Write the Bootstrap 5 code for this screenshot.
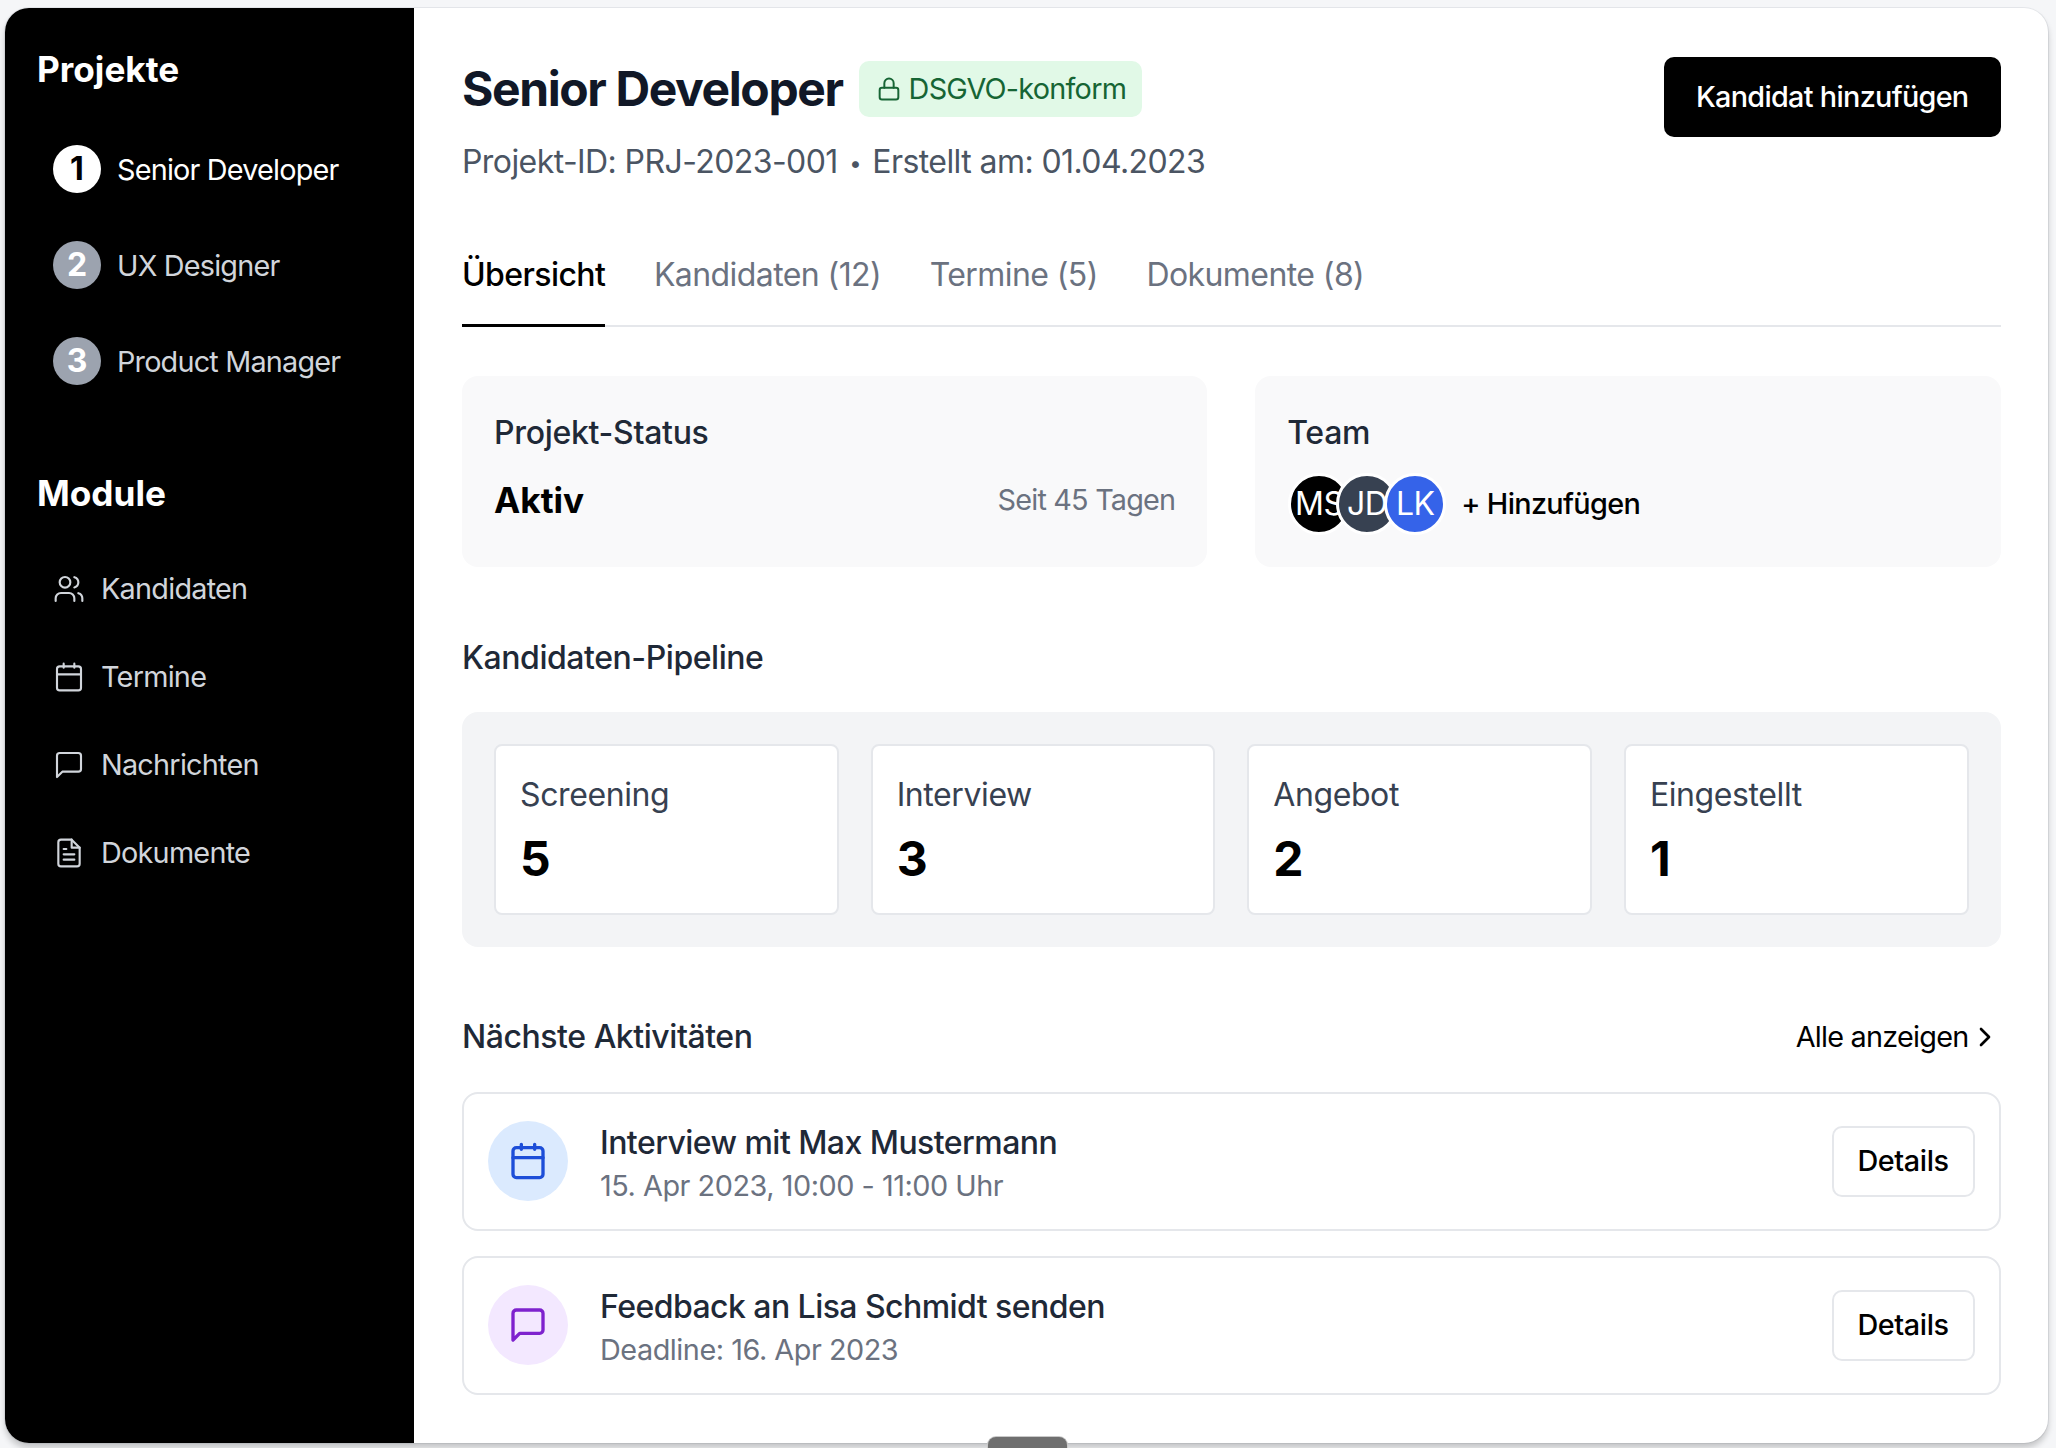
<!DOCTYPE html>
<html lang="de">
<head>
    <meta charset="UTF-8">
    <meta name="viewport" content="width=device-width, initial-scale=1.0">
    <title>Senior Developer</title>
    <link rel="stylesheet" href="https://cdn.jsdelivr.net/npm/bootstrap@5.3.0/dist/css/bootstrap.min.css">
    <style>
        html, body { height: 100%; }
        body {
            background-color: #f5f6f8;
            font-family: Inter, "Liberation Sans", sans-serif;
            color: #000;
            padding: 8px 8px 0 5px;
            overflow: hidden;
        }
        .app-window {
            height: 1435px;
            background: #fff;
            border-radius: 24px;
            overflow: hidden;
            box-shadow: 0 5px 6px rgba(0, 0, 0, 0.2), 0 0 0 1px #e5e7eb;
        }
        .side-panel { width: 409px; flex: none; background: #000; padding: 37px 0 0 32px; }
        .side-title { font-size: 35.2px; line-height: 48px; font-weight: 700; color: #fff; margin: 0; }
        .side-step { height: 96px; padding-left: 16px; gap: 16px; color: #d1d5db; font-size: 28.8px; letter-spacing: -0.8px; line-height: 46px; }
        .side-step.is-active { color: #fff; }
        .step-num {
            width: 48px; height: 48px; border-radius: 50%;
            background: #9ca3af; color: #fff; font-weight: 700; font-size: 32px; letter-spacing: 0;
        }
        .is-active .step-num { background: #fff; color: #000; }
        .step-name { padding-top: 1px; }
        .module-title { margin-top: 60px; margin-bottom: 28px; }
        .side-module { height: 88px; padding-left: 16px; gap: 16px; color: #d1d5db; font-size: 28.8px; letter-spacing: -0.75px; }
        .side-module svg { width: 32px; height: 32px; }
        .main-panel { flex: 1; min-width: 0; padding: 49px 47.5px 0 48px; }
        .page-title { font-size: 48px; line-height: 64px; font-weight: 700; color: #111827; margin: 0; letter-spacing: -1.4px; }
        .dsgvo-tag {
            background: #e1f9e7; color: #166534; font-size: 28.8px; height: 56px; letter-spacing: -0.75px;
            border-radius: 10px; padding: 0 16px; gap: 6px;
        }
        .dsgvo-tag svg { width: 28px; height: 28px; }
        .page-sub { font-size: 32px; line-height: 48px; color: #4b5563; margin: 17px 0 0; letter-spacing: -0.58px; }
        .sub-dot { font-size: 22px; margin: 0 3px; vertical-align: 2px; }
        .add-btn {
            background: #000; color: #fff; border: 0; border-radius: 10px; letter-spacing: -0.7px;
            font-size: 28.8px; font-weight: 500; height: 80px; padding: 0 32px;
        }
        .tab-row { margin-top: 38px; border-bottom: 2px solid #e5e7eb; gap: 48.6px; height: 102px; }
        .tab-link { font-size: 32px; color: #6b7280; text-decoration: none; height: 102px; padding-top: 26px; line-height: 48px; letter-spacing: -0.58px; }
        .tab-link.is-current { color: #000; font-weight: 500; border-bottom: 3px solid #000; }
        .info-row { margin-top: 48.5px; gap: 48px; }
        .info-box { flex: 1 1 0; height: 191px; background: #f9f9fa; border-radius: 16px; padding: 33px 32px 32px; }
        .info-label { font-size: 32px; line-height: 48px; font-weight: 500; color: #1f2937; letter-spacing: -0.3px; }
        .status-val { font-size: 35.2px; font-weight: 700; line-height: 56px; }
        .status-since { font-size: 28.8px; color: #6b7280; letter-spacing: -0.8px; }
        .status-line { margin-top: 15px; }
        .team-line { margin-top: 16.5px; margin-left: 1px; }
        .avatar {
            width: 62px; height: 62px; border: 3px solid #fff; border-radius: 50%;
            color: #fff; font-size: 32px; margin-right: -14px; flex: none; overflow: hidden; letter-spacing: -0.5px;
        }
        .team-add { margin-left: 29px; font-size: 28.8px; font-weight: 500; color: #000; letter-spacing: -0.65px; }
        .sect-title { font-size: 32px; line-height: 48px; font-weight: 500; color: #1f2937; margin: 0; letter-spacing: -0.45px; }
        .pipe-box { background: #f3f4f6; border-radius: 16px; padding: 32px; gap: 32px; margin-top: 30px; }
        .pipe-card {
            flex: 1 1 0; height: 171px; background: #fff; border: 2px solid #e5e7eb;
            border-radius: 8px; padding: 25px 24px 24px;
        }
        .pipe-label { font-size: 32px; line-height: 48px; color: #374151; letter-spacing: -0.4px; }
        .pipe-num { font-size: 48px; line-height: 64px; font-weight: 700; margin-top: 8px; }
        .all-link { font-size: 28.8px; color: #000; text-decoration: none; letter-spacing: -0.75px; }
        .all-link svg { width: 32px; height: 32px; }
        .act-row {
            height: 139px; border: 2px solid #e5e7eb; border-radius: 16px; padding: 0 24px;
            margin-bottom: 25px; gap: 32px;
        }
        .act-icon { width: 80px; height: 80px; border-radius: 50%; flex: none; }
        .act-icon svg { width: 40px; height: 40px; }
        .act-blue { background: #dbeafe; color: #1d4ed8; }
        .act-purple { background: #f3e8ff; color: #7e22ce; }
        .act-text { padding-top: 5px; }
        .act-title { font-size: 32px; line-height: 44px; font-weight: 500; color: #1f2937; letter-spacing: -0.55px; }
        .act-sub { font-size: 28.8px; line-height: 42px; color: #6b7280; letter-spacing: -0.46px; }
        .detail-btn {
            background: #fff; border: 2px solid #e5e7eb; border-radius: 10px; color: #000; letter-spacing: -0.4px;
            font-size: 28.8px; font-weight: 500; width: 143px; height: 71px;
        }
        .drag-handle {
            position: fixed; left: 988px; bottom: 0; width: 79px; height: 11px;
            background: #6f6f6f; border-radius: 8px 8px 0 0; box-shadow: 0 0 0 1px #c9c9c9;
        }
    </style>
</head>
<body>
    <div class="app-window d-flex">

        <!-- Sidebar -->
        <aside class="side-panel">
            <h2 class="side-title">Projekte</h2>
            <div class="mt-4 pt-1">
                <div class="side-step is-active d-flex align-items-center"><span class="step-num d-flex align-items-center justify-content-center">1</span><span class="step-name">Senior Developer</span></div>
                <div class="side-step d-flex align-items-center"><span class="step-num d-flex align-items-center justify-content-center">2</span><span class="step-name">UX Designer</span></div>
                <div class="side-step d-flex align-items-center"><span class="step-num d-flex align-items-center justify-content-center">3</span><span class="step-name">Product Manager</span></div>
            </div>
            <h2 class="side-title module-title">Module</h2>
            <div class="side-module d-flex align-items-center">
                <svg viewBox="0 0 24 24" fill="none" stroke="currentColor" stroke-width="1.6" stroke-linecap="round" stroke-linejoin="round"><path d="M16 21v-2a4 4 0 0 0-4-4H6a4 4 0 0 0-4 4v2"/><circle cx="9" cy="7" r="4"/><path d="M22 21v-2a4 4 0 0 0-3-3.87"/><path d="M16 3.13a4 4 0 0 1 0 7.75"/></svg>
                Kandidaten
            </div>
            <div class="side-module d-flex align-items-center">
                <svg viewBox="0 0 24 24" fill="none" stroke="currentColor" stroke-width="1.6" stroke-linecap="round" stroke-linejoin="round"><rect x="3" y="4" width="18" height="18" rx="2"/><path d="M16 2v3M8 2v3M3 10h18"/></svg>
                Termine
            </div>
            <div class="side-module d-flex align-items-center">
                <svg viewBox="0 0 24 24" fill="none" stroke="currentColor" stroke-width="1.6" stroke-linecap="round" stroke-linejoin="round"><path d="M21 15a2 2 0 0 1-2 2H7l-4 4V5a2 2 0 0 1 2-2h14a2 2 0 0 1 2 2z"/></svg>
                Nachrichten
            </div>
            <div class="side-module d-flex align-items-center">
                <svg viewBox="0 0 24 24" fill="none" stroke="currentColor" stroke-width="1.6" stroke-linecap="round" stroke-linejoin="round"><path d="M14 2H6a2 2 0 0 0-2 2v16a2 2 0 0 0 2 2h12a2 2 0 0 0 2-2V8z"/><path d="M14 2v6h6M16 13H8M16 17H8M10 9H8"/></svg>
                Dokumente
            </div>
        </aside>

        <!-- Inhalt -->
        <main class="main-panel">
            <div class="d-flex justify-content-between align-items-start">
                <div>
                    <div class="d-flex align-items-center gap-3">
                        <h1 class="page-title">Senior Developer</h1>
                        <span class="dsgvo-tag d-flex align-items-center">
                            <svg viewBox="0 0 24 24" fill="none" stroke="currentColor" stroke-width="1.7" stroke-linecap="round" stroke-linejoin="round"><rect x="4" y="11" width="16" height="10" rx="2"/><path d="M8 11V7a4 4 0 0 1 8 0v4"/></svg>
                            DSGVO-konform
                        </span>
                    </div>
                    <p class="page-sub">Projekt-ID: PRJ-2023-001 <span class="sub-dot">•</span> Erstellt am: 01.04.2023</p>
                </div>
                <button class="add-btn" type="button">Kandidat hinzufügen</button>
            </div>

            <div class="tab-row d-flex">
                <a class="tab-link is-current" href="#">Übersicht</a>
                <a class="tab-link" href="#">Kandidaten (12)</a>
                <a class="tab-link" href="#">Termine (5)</a>
                <a class="tab-link" href="#">Dokumente (8)</a>
            </div>

            <div class="info-row d-flex">
                <div class="info-box">
                    <div class="info-label">Projekt-Status</div>
                    <div class="status-line d-flex justify-content-between align-items-center">
                        <span class="status-val">Aktiv</span>
                        <span class="status-since">Seit 45 Tagen</span>
                    </div>
                </div>
                <div class="info-box">
                    <div class="info-label">Team</div>
                    <div class="team-line d-flex align-items-center">
                        <span class="avatar d-flex align-items-center justify-content-center bg-black">MS</span>
                        <span class="avatar d-flex align-items-center justify-content-center" style="background:#374151">JD</span>
                        <span class="avatar d-flex align-items-center justify-content-center" style="background:#3563e9">LK</span>
                        <span class="team-add">+ Hinzufügen</span>
                    </div>
                </div>
            </div>

            <h3 class="sect-title" style="margin-top:67px">Kandidaten-Pipeline</h3>
            <div class="pipe-box d-flex">
                <div class="pipe-card"><div class="pipe-label">Screening</div><div class="pipe-num">5</div></div>
                <div class="pipe-card"><div class="pipe-label">Interview</div><div class="pipe-num">3</div></div>
                <div class="pipe-card"><div class="pipe-label">Angebot</div><div class="pipe-num">2</div></div>
                <div class="pipe-card"><div class="pipe-label">Eingestellt</div><div class="pipe-num">1</div></div>
            </div>

            <div class="d-flex justify-content-between align-items-center" style="margin-top:66px;margin-bottom:31px">
                <h3 class="sect-title">Nächste Aktivitäten</h3>
                <a class="all-link d-flex align-items-center" href="#">Alle anzeigen
                    <svg viewBox="0 0 24 24" fill="none" stroke="currentColor" stroke-width="2" stroke-linecap="round" stroke-linejoin="round"><path d="m9 18 6-6-6-6"/></svg>
                </a>
            </div>

            <div class="act-row d-flex align-items-center">
                <div class="act-icon act-blue d-flex align-items-center justify-content-center">
                    <svg viewBox="0 0 24 24" fill="none" stroke="currentColor" stroke-width="2" stroke-linecap="round" stroke-linejoin="round"><rect x="3" y="4" width="18" height="18" rx="2"/><path d="M16 2v3M8 2v3M3 10h18"/></svg>
                </div>
                <div class="act-text flex-grow-1">
                    <div class="act-title">Interview mit Max Mustermann</div>
                    <div class="act-sub">15. Apr 2023, 10:00 - 11:00 Uhr</div>
                </div>
                <button class="detail-btn" type="button">Details</button>
            </div>
            <div class="act-row d-flex align-items-center">
                <div class="act-icon act-purple d-flex align-items-center justify-content-center">
                    <svg viewBox="0 0 24 24" fill="none" stroke="currentColor" stroke-width="2" stroke-linecap="round" stroke-linejoin="round"><path d="M21 15a2 2 0 0 1-2 2H7l-4 4V5a2 2 0 0 1 2-2h14a2 2 0 0 1 2 2z"/></svg>
                </div>
                <div class="act-text flex-grow-1">
                    <div class="act-title">Feedback an Lisa Schmidt senden</div>
                    <div class="act-sub">Deadline: 16. Apr 2023</div>
                </div>
                <button class="detail-btn" type="button">Details</button>
            </div>
        </main>
    </div>
    <div class="drag-handle"></div>

    <script src="https://cdn.jsdelivr.net/npm/bootstrap@5.3.0/dist/js/bootstrap.bundle.min.js"></script>
</body>
</html>
